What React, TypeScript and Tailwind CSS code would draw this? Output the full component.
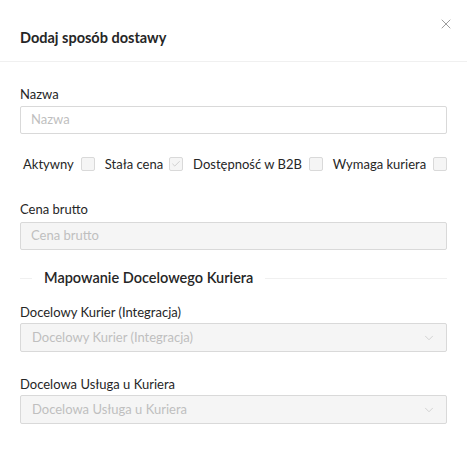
import { ChevronDown, X, Check } from "lucide-react";

const font = { fontFamily: 'Lato, "Noto Sans", sans-serif' };

const Box = ({ checked }: { checked?: boolean }) => (
  <span className="w-[14px] h-[14px] border border-[#d9d9d9] bg-[#f5f5f5] rounded-[2px] flex items-center justify-center">
    {checked && <Check size={10} strokeWidth={1.5} className="text-[#b8b8b8]" />}
  </span>
);

const Select = ({ text }: { text: string }) => (
  <div className="h-[29px] border border-[#d9d9d9] bg-[#f5f5f5] rounded-[2px] flex items-center justify-between pl-[11px] pr-[10px]">
    <span className="text-[13px] text-[#bfbfbf]">{text}</span>
    <ChevronDown size={14} strokeWidth={1.2} className="text-[#c4c4c4]" />
  </div>
);

export default function App() {
  return (
    <div className="w-[467px] h-[462px] bg-white text-[#262626] relative" style={font}>
      <button className="absolute right-[13px] top-[16px] text-[#8c8c8c]">
        <X size={16} strokeWidth={1.3} />
      </button>
      <div className="h-[62px] border-b border-[#f0f0f0] px-5 flex items-center pt-[14px]">
        <h2 className="text-[14.5px] font-bold text-[#262626]">Dodaj sposób dostawy</h2>
      </div>

      <div className="px-5 pt-[22px]">
        <label className="block text-[13px] leading-[20px] mb-[2px]">Nazwa</label>
        <div className="h-[28px] border border-[#d9d9d9] rounded-[2px] flex items-center px-[10px]">
          <span className="text-[13px] text-[#bfbfbf]">Nazwa</span>
        </div>

        <div className="flex items-center mt-[20px] pl-[3px] text-[13px] leading-[20px] whitespace-nowrap">
          <span>Aktywny</span>
          <span className="ml-[7px]"><Box /></span>
          <span className="ml-[10px]">Stała cena</span>
          <span className="ml-[6px]"><Box checked /></span>
          <span className="ml-[10px]">Dostępność w B2B</span>
          <span className="ml-[7px]"><Box /></span>
          <span className="ml-[10px]">Wymaga kuriera</span>
          <span className="ml-auto"><Box /></span>
        </div>

        <label className="block text-[13px] leading-[20px] mt-[25px] mb-[3px]">Cena brutto</label>
        <div className="h-[28px] border border-[#d9d9d9] bg-[#f5f5f5] rounded-[2px] flex items-center px-[10px]">
          <span className="text-[13px] text-[#bfbfbf]">Cena brutto</span>
        </div>

        <div className="flex items-center mt-[16px] h-[24px]">
          <div className="w-[12px] border-t border-[#f0f0f0]" />
          <span className="px-[12px] text-[14.5px] font-semibold text-[#262626]">Mapowanie Docelowego Kuriera</span>
          <div className="flex-1 border-t border-[#f0f0f0]" />
        </div>

        <label className="block text-[13px] leading-[20px] mt-[12px] mb-[1px]">Docelowy Kurier (Integracja)</label>
        <Select text="Docelowy Kurier (Integracja)" />

        <label className="block text-[13px] leading-[20px] mt-[22px] mb-[1px]">Docelowa Usługa u Kuriera</label>
        <Select text="Docelowa Usługa u Kuriera" />
      </div>
    </div>
  );
}
